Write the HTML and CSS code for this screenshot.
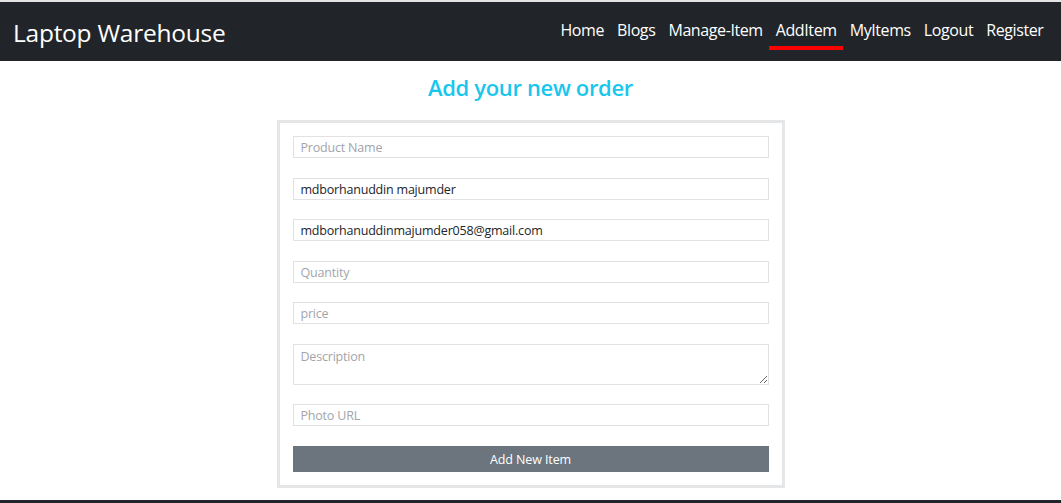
FILE: index.html
```html
<!DOCTYPE html>
<html lang="en">
<head>
<meta charset="utf-8">
<title>Laptop Warehouse</title>
<link rel="stylesheet" href="styles.css">
</head>
<body>
<header class="navbar">
  <a class="brand" href="#">Laptop Warehouse</a>
  <nav class="links">
    <a href="#">Home</a>
    <a href="#">Blogs</a>
    <a href="#">Manage-Item</a>
    <a href="#" class="active">AddItem</a>
    <a href="#">MyItems</a>
    <a href="#">Logout</a>
    <a href="#">Register</a>
  </nav>
</header>
<main class="main">
  <h2 class="title">Add your new order</h2>
  <form class="card">
    <input class="field" type="text" placeholder="Product Name">
    <input class="field" type="text" value="mdborhanuddin majumder">
    <input class="field" type="email" value="mdborhanuddinmajumder058@gmail.com">
    <input class="field" type="number" placeholder="Quantity">
    <input class="field" type="number" placeholder="price">
    <textarea class="field area" placeholder="Description"></textarea>
    <input class="field" type="text" placeholder="Photo URL">
    <button class="submit" type="button">Add New Item</button>
  </form>
</main>
<footer class="footer"></footer>
</body>
</html>
```

FILE: styles.css
```css
* { box-sizing: border-box; }
html, body { margin: 0; padding: 0; }
body {
  font-family: "Open Sans", "Noto Sans", sans-serif;
  background: #fff;
  color: #212529;
  border-top: 2px solid #e4e4e4;
}
.navbar {
  height: 59px;
  background: #212529;
  display: flex;
  align-items: center;
  justify-content: space-between;
  padding: 0 11px 0 13px;
}
.brand {
  color: #fff;
  text-decoration: none;
  font-size: 24.5px;
  letter-spacing: -0.25px;
  margin-top: 1px;
}
.links {
  display: flex;
  align-items: center;
  margin-top: -7px;
}
.links a {
  color: #fff;
  text-decoration: none;
  font-size: 16px;
  letter-spacing: -0.4px;
  padding: 8px 6.5px 5px;
  border-bottom: 4px solid transparent;
  margin-top: 4px;
}
.links a.active { border-bottom-color: #ff0000; }
.main {
  display: flex;
  flex-direction: column;
  align-items: center;
}
.title {
  margin: 12px 0 19px;
  color: #18c6ee;
  font-size: 22px;
  font-weight: 600;
  line-height: 28px;
  letter-spacing: -0.35px;
}
.card {
  width: 508px;
  border: 3px solid #e5e6e8;
  padding: 13px;
  display: flex;
  flex-direction: column;
}
.field {
  width: 100%;
  height: 22px;
  border: 1px solid #e2e2e2;
  padding: 1px 7px 0;
  font-family: inherit;
  font-size: 12.5px;
  letter-spacing: -0.2px;
  color: #212529;
  margin-bottom: 19.5px;
  outline: none;
  background: #fff;
}
.field::placeholder { color: #a2a5ab; }
.area {
  height: 41px;
  resize: vertical;
  padding-top: 3px;
  display: block;
}
.submit {
  margin-top: 0.5px;
  height: 26px;
  width: 100%;
  border: none;
  background: #6c757d;
  color: #fff;
  font-family: inherit;
  font-size: 12.5px;
  letter-spacing: -0.1px;
}
.footer {
  margin-top: 12px;
  height: 10px;
  background: #212529;
}
```
